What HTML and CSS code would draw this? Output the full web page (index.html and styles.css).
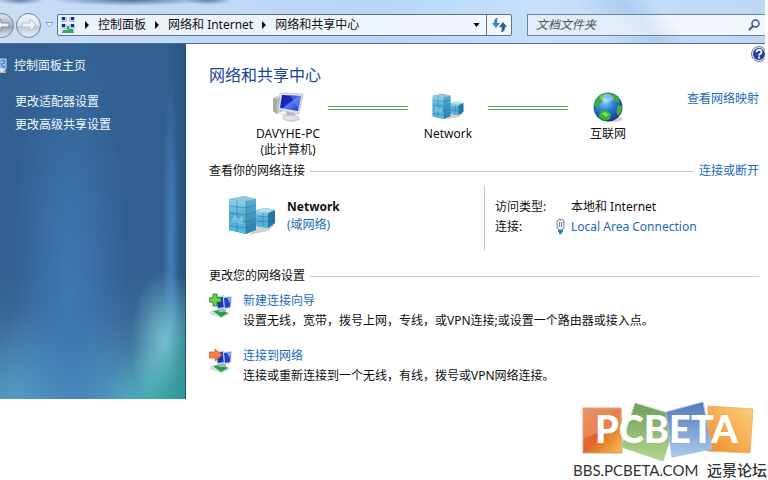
FILE: index.html
```html
<!DOCTYPE html>
<html lang="zh-CN">
<head>
<meta charset="utf-8">
<title>网络和共享中心</title>
<link rel="stylesheet" href="styles.css">
</head>
<body>
<svg class="defs" width="0" height="0" aria-hidden="true">
  <defs>
    <linearGradient id="face" x1="0" y1="0" x2="0" y2="1"><stop offset="0" stop-color="#8fd6ee"/><stop offset=".5" stop-color="#4fa9d2"/><stop offset="1" stop-color="#58b9de"/></linearGradient>
    <linearGradient id="side" x1="0" y1="0" x2="0" y2="1"><stop offset="0" stop-color="#58b2d6"/><stop offset="1" stop-color="#2c7fae"/></linearGradient>
    <linearGradient id="screen" x1="0" y1="0" x2="1" y2="1"><stop offset="0" stop-color="#1420a0"/><stop offset=".45" stop-color="#1a2cc0"/><stop offset=".5" stop-color="#5a7cf0"/><stop offset="1" stop-color="#1b2fc4"/></linearGradient>
    <radialGradient id="sea" cx=".4" cy=".3" r=".75"><stop offset="0" stop-color="#8fdcff"/><stop offset=".4" stop-color="#2f86dc"/><stop offset="1" stop-color="#122a86"/></radialGradient>
    <linearGradient id="orange" x1="0" y1="0" x2="1" y2="1"><stop offset="0" stop-color="#e8834f"/><stop offset=".5" stop-color="#e0642c"/><stop offset="1" stop-color="#f6c445"/></linearGradient>
    <linearGradient id="green" x1="0" y1="0" x2="0" y2="1"><stop offset="0" stop-color="#6f9f5c"/><stop offset="1" stop-color="#b4d68c"/></linearGradient>
    <linearGradient id="blue" x1="0" y1="0" x2="0" y2="1"><stop offset="0" stop-color="#4f78bd"/><stop offset="1" stop-color="#a9cbec"/></linearGradient>
    <linearGradient id="yellow" x1="0" y1="1" x2="1" y2="0"><stop offset="0" stop-color="#f08a2a"/><stop offset=".6" stop-color="#f8b45a"/><stop offset="1" stop-color="#fbd07e"/></linearGradient>
    <symbol id="servers" viewBox="0 0 48 40">
      <path d="M20 39 32 28 47 29 40 35Z" fill="#000" opacity=".18"/>
      <path d="M29 14 37 12 47 14V27L40 32 27 30V15Z" fill="#3b93bd"/>
      <path d="M27 15 40 17V32L27 30Z" fill="url(#face)"/>
      <path d="M40 17 47 14V27L40 32Z" fill="#2a76a2"/>
      <path d="M27 15 37 12 47 14 40 17Z" fill="#b5dfec"/>
      <path d="M1 3 16 0 28 3V34L18 38 1 34Z" fill="url(#side)"/>
      <path d="M1 3 18 5V38L1 34Z" fill="url(#face)"/>
      <path d="M1 3 16 0 28 3 18 5Z" fill="#9cc5d4"/>
      <path d="M9 4V36M1 10 18 12 28 9M1 17 18 19 28 16M1 24 18 26 28 23M1 30 18 32 28 29M18 5V38M29 20 40 21 47 19M29 25 40 26 47 23M35 17V30" fill="none" stroke="#236f9c" stroke-width=".6" opacity=".8"/>
      <path d="M3 24 7 19 11 23 15 19V28L3 26Z" fill="#b9e5f2" opacity=".4"/>
    </symbol>
    <symbol id="netpc" viewBox="0 0 24 25">
      <path d="M1 18 9 16 20 19 20 22 12 25 1 21Z" fill="#d5dcdd"/>
      <path d="M4 18 12 17 19 20 12 24Z" fill="#25a04c"/>
      <path d="M10 15H17V19H10Z" fill="#9ab8b4"/>
      <path d="M6 4 15 2 17 15 8 17Z" fill="#bfd0ef"/><path d="M7 5 14 4 15 14 9 15Z" fill="#1c33bd"/>
      <path d="M14 4 23 3 22 15 15 17Z" fill="#cbd8f2"/><path d="M15 5 22 4 21 14 16 15Z" fill="#2241cc"/><path d="M18 5 22 4 21 10Z" fill="#8fb0f4"/>
    </symbol>
  </defs>
</svg>
<div class="window">
  <header class="toolbar">
    <div class="history">
      <button class="round" type="button" aria-label="后退"><svg width="16" height="14" viewBox="0 0 16 14"><path d="M7 1 1 7l6 6v-4h8V5H7Z" fill="#eef3f8" stroke="#7f8c9b"/></svg></button>
      <button class="round" type="button" aria-label="前进"><svg width="16" height="14" viewBox="0 0 16 14"><path d="M9 1l6 6-6 6V9H1V5h8Z" fill="#eef3f8" stroke="#b9c4d0"/></svg></button>
      <button class="plain recent" type="button" aria-label="最近页面"><svg width="9" height="6" viewBox="0 0 9 6"><path d="M1 .5h7L4.500 5Z" fill="#f4f9fe" stroke="#8aa0b8"/></svg></button>
    </div>
    <nav class="address" aria-label="地址">
      <svg width="16" height="18" viewBox="0 0 16 18"><path d="M1 1h6v5H1zM9 1h6v5H9zM1 8h6v5H1zM9 8h6v5H9z" fill="#b7c8e8"/><path d="M2 1h3v3H2zM11 1h3v3h-3zM2 8h3v3H2zM11 8h3v3h-3z" fill="#20278f"/><path d="M7 10h2v3h4l1 4H2l1-3h4Z" fill="#35ae69"/></svg>
      <span class="arrow"></span><a href="#">控制面板</a>
      <span class="arrow"></span><a href="#">网络和 Internet</a>
      <span class="arrow"></span><a href="#">网络和共享中心</a>
      <button class="plain expand" type="button" aria-label="以前的位置"><svg width="7" height="4" viewBox="0 0 8 5"><path d="M0 0h8L4 5Z" fill="#111"/></svg></button>
      <button class="plain refresh" type="button" aria-label="刷新"><svg width="15" height="14" viewBox="0 0 15 14"><path d="M6 0C3 0 2 2 2 5H0l4 5 4-5H5.500C5 3 5 1 6 0Z" fill="#3f86bd"/><path d="M9 14c3 0 4-2 4-5h2l-4-5-4 5h2.500c.5 2 .5 4-.5 5Z" fill="#2f6591"/></svg></button>
    </nav>
    <form class="search">
      <input type="text" aria-label="搜索" placeholder="文档文件夹">
      <button class="plain" type="button" aria-label="开始搜索"><svg width="12" height="12" viewBox="0 0 12 12"><circle cx="7.500" cy="4.500" r="3.500" fill="none" stroke="#37598f" stroke-width="1.500"/><path d="M5 7 1 11" stroke="#37598f" stroke-width="2"/></svg></button>
    </form>
  </header>
  <div class="body">
    <aside class="sidebar">
      <a class="home" href="#"><svg width="7" height="16" viewBox="0 0 7 16"><path d="M0 1h6v10H0Z" fill="#5a8be0" stroke="#cfdcf2"/><path d="M1 4h2M3 7h2M1 9h1" stroke="#e8f2ff"/><path d="M0 11h5l1 4H0Z" fill="#b4bcc6"/><circle cx="2" cy="12" r="2" fill="#e9e4dc"/></svg>控制面板主页</a>
      <a href="#">更改适配器设置</a>
      <a href="#">更改高级共享设置</a>
    </aside>
    <main>
      <button class="plain help" type="button" aria-label="帮助"><svg width="16" height="16" viewBox="0 0 16 16"><circle cx="8" cy="8" r="7.500" fill="#dfe2ef" stroke="#777ca6"/><circle cx="8" cy="8" r="6" fill="#2a3f9f"/><path d="M5.500 6.200C5.500 3 10.500 3 10.500 6c0 2-2.500 1.800-2.500 3.500M8 10.500v2" fill="none" stroke="#fff" stroke-width="1.800"/></svg></button>
      <h1>网络和共享中心</h1>
      <div class="map">
        <div class="node">
          <svg width="32" height="32" viewBox="0 0 32 32"><path d="M8 23 20 20 29 29 19 31Z" fill="#000" opacity=".1"/><path d="M1 7 5 5 10 6V21L5 23 1 20Z" fill="#c9ccc4"/><path d="M1 7 5 8V23L1 20Z" fill="#a6aaa2"/><path d="M6 9 9 8M6 12 9 11" stroke="#5d645f"/><circle cx="7" cy="18" r="1" fill="#47b84b"/><path d="M14 20 22 21 23 26 15 26Z" fill="#b7bcc6"/><ellipse cx="19" cy="27" rx="8" ry="3" fill="#dfe3e9" stroke="#aeb5c0" stroke-width=".7"/><path d="M8 2 31 3 27 23 6 19Z" fill="#dce2ed" stroke="#a8b3c8" stroke-width=".6"/><path d="M10 4 29 5 26 20 8 17Z" fill="url(#screen)"/><path d="M18 4 29 5 27 18Z" fill="#6d90ee" opacity=".55"/></svg>
          <span>DAVYHE-PC</span><span>(此计算机)</span>
        </div>
        <div class="link"></div>
        <div class="node"><svg width="32" height="32"><use href="#servers"/></svg><span>Network</span></div>
        <div class="link"></div>
        <div class="node">
          <svg width="32" height="32" viewBox="0 0 32 32"><ellipse cx="20" cy="28" rx="11" ry="3" fill="#000" opacity=".18"/><circle cx="16" cy="16" r="14.500" fill="url(#sea)"/><path d="M3 12C4 6 8 3 13 2l1 3-4 2 1 4-4 2-1 4-3-1Z" fill="#3fae35"/><path d="M17 2c5 0 9 3 11 7l-2 3-4-2-1-4-4-1Z" fill="#3da33c"/><path d="M8 20l6-1 5 4-1 5-5 2-6-4Z" fill="#35b52f"/><path d="M26 14l4 1c0 4-1 7-4 10l-2-4Z" fill="#49ab3c"/><path d="M9 22l5-1 3 3-3 2Z" fill="#7bdc55"/><ellipse cx="15" cy="7" rx="7" ry="4" fill="#fff" opacity=".3"/></svg>
          <span>互联网</span>
        </div>
        <a class="full" href="#">查看网络映射</a>
      </div>
      <div class="section"><h2>查看你的网络连接</h2><hr><a href="#">连接或断开</a></div>
      <div class="network">
        <div class="identity">
          <svg width="48" height="40"><use href="#servers"/></svg>
          <div><strong>Network</strong><a href="#">(域网络)</a></div>
        </div>
        <dl>
          <dt>访问类型:</dt><dd>本地和 Internet</dd>
          <dt>连接:</dt><dd><svg width="9" height="16" viewBox="0 0 9 16"><path d="M1 2 3 .5h3L8 2v7L6 11H3L1 9Z" fill="#e4ebf3" stroke="#74869c"/><path d="M3.500 3v5M5.500 3v5" stroke="#7690b0"/><path d="M2 11h5v2H6v2H3v-2H2Z" fill="#357fb8"/></svg><a href="#">Local Area Connection</a></dd>
        </dl>
      </div>
      <div class="section"><h2>更改您的网络设置</h2><hr></div>
      <ul class="tasks">
        <li>
          <svg width="24" height="25" viewBox="0 0 24 25"><use href="#netpc" width="24" height="25"/><path d="M4 1h4v4h4v4H8v4H4V9H0V5h4Z" fill="#6fd04a" stroke="#258c25"/></svg>
          <div><a href="#">新建连接向导</a><p>设置无线，宽带，拨号上网，专线，或VPN连接;或设置一个路由器或接入点。</p></div>
        </li>
        <li>
          <svg width="24" height="25" viewBox="0 0 24 25"><use href="#netpc" width="24" height="25"/><path d="M0 4h6V1l7 6-7 6v-3H0Z" fill="#f08448" stroke="#d05a26" stroke-width=".7"/></svg>
          <div><a href="#">连接到网络</a><p>连接或重新连接到一个无线，有线，拨号或VPN网络连接。</p></div>
        </li>
      </ul>
    </main>
  </div>
</div>
<footer>
  <svg width="200" height="81" viewBox="0 0 200 81" role="img" aria-label="PCBETA">
    <g stroke-width="1">
      <path d="M15 9 53 9 54 54 15 54Z" fill="url(#orange)" stroke="#d99a76"/>
      <path d="M15 9H53V22C42 36 28 32 15 40Z" fill="#f5b594" opacity=".35"/>
      <path d="M140 7 185 10 182 54 139 52Z" fill="url(#yellow)" stroke="#e6b878"/>
      <path d="M67 4 110 17 95 62 53 48Z" fill="url(#green)" stroke="#b9cfaa"/>
      <path d="M98 13 135 3 144 50 104 58Z" fill="url(#blue)" stroke="#a9bddc"/>
    </g>
    <text class="brand" x="27" y="44">PCBETA</text>
    <text class="site" x="5" y="77">BBS.PCBETA.COM</text>
    <text class="forum" x="139" y="77">远景论坛</text>
  </svg>
</footer>
</body>
</html>
```
FILE: styles.css
```css
* { box-sizing: border-box; }
body {
  margin: 0;
  background: #fff;
  color: #111;
  font: 12px/16px "Noto Sans", "Noto Sans CJK SC", sans-serif;
}
.defs { position: absolute; }
svg { display: block; flex: none; }
a { color: #1a6bb8; text-decoration: none; white-space: nowrap; }
h1, h2, p, ul, dl, dd { margin: 0; padding: 0; font-weight: normal; }
.plain { border: 0; padding: 0; background: none; display: grid; place-items: center; }

.window { margin-right: 3px; overflow: hidden; }
.toolbar {
  display: flex;
  align-items: center;
  padding: 14px 0 7px;
  border-bottom: 1px solid #4f6d8c;
  background:
    radial-gradient(ellipse 24px 5px at 20px 0, #5f7d9c, transparent),
    radial-gradient(ellipse 80px 6px at 130px 0, #54728f, transparent),
    radial-gradient(ellipse 24px 5px at 208px 0, #5f7d9c, transparent),
    linear-gradient(50deg, transparent 76%, #b0cdf0 82%, transparent 86%),
    linear-gradient(90deg, #c9def5, #b9d6f6 50%, #c5e1fb 70%, #bcd8f5);
}
.history { display: flex; align-items: center; width: 57px; height: 22px; }
.round {
  flex: none;
  width: 25px;
  height: 25px;
  margin-left: 2px;
  padding: 0;
  display: grid;
  place-items: center;
  border: 1px solid #71859c;
  border-radius: 50%;
  background: linear-gradient(#eff4f9, #dbe4ed 50%, #b8c6d5 52%, #e7f0f8);
}
.round:first-child { margin-left: -11px; background: linear-gradient(#dce3ea, #aab6c2 50%, #8f9cab 52%, #dfe8f0); }
.recent { margin-left: 4px; }
.address {
  flex: 1;
  display: flex;
  align-items: center;
  height: 22px;
  padding-left: 2px;
  border: 1px solid #5f7389;
  border-radius: 2px;
  background: linear-gradient(90deg, #e9f1fa, #f2f7fd);
}
.address a { color: #111; }
.arrow { margin: 0 9px; border: solid transparent; border-width: 4px 0 4px 4px; border-left-color: #111; }
.expand { width: 20px; height: 20px; margin-left: auto; }
.refresh { width: 25px; height: 20px; border-left: 1px solid #5f7389; }
.search {
  display: flex;
  align-items: center;
  width: 238px;
  height: 22px;
  margin-left: 15px;
  padding: 0 5px 0 8px;
  border: 1px solid #6f8399;
  border-right: 0;
  background: linear-gradient(50deg, #e2edfa 40%, #d9e7f6 50%, #f2f7fd 62%);
}
.search input { flex: 1; min-width: 0; padding: 0; border: 0; background: none; font: italic 12px/16px "Noto Sans", "Noto Sans CJK SC", sans-serif; }
.search input::placeholder { color: #555; opacity: 1; }

.body { display: flex; }
.sidebar {
  width: 186px;
  padding: 14px 0 0;
  display: flex;
  flex-direction: column;
  border-right: 1px solid #244f7c;
  background:
    linear-gradient(115deg, transparent 86%, #23938a99 95%),
    radial-gradient(ellipse 36px 75px at 166px 300px, #86d6dccc, transparent),
    radial-gradient(ellipse 56px 60px at 158px 360px, #42c9bd99, transparent),
    radial-gradient(ellipse 8px 170px at 171px 200px, #4480c0, transparent),
    radial-gradient(ellipse 60px 270px at 70px 250px, #3f78b4, transparent),
    radial-gradient(ellipse 90px 110px at 60px 365px, #62b4e099, transparent),
    linear-gradient(90deg, transparent 90%, #1f467066),
    linear-gradient(#325f90, #315f8f 65%, #3a6a97 78%, #4e8fb2);
}
.sidebar a { color: #f1f7fd; line-height: 23px; padding-left: 15px; }
.sidebar .home { display: flex; align-items: center; gap: 7px; padding: 0; line-height: 16px; margin-bottom: 16px; }
main { position: relative; flex: 1; padding: 19px 6px 13px 23px; }
.help { position: absolute; top: 2px; right: -2px; }
h1 { color: #17459b; font-size: 16px; line-height: 24px; }
.map { display: flex; margin: 4px 0 5px; padding-left: 39px; }
.node { width: 80px; display: flex; flex-direction: column; align-items: center; line-height: 16px; white-space: nowrap; }
.node svg { margin-bottom: 3px; }
.link { width: 80px; height: 4px; margin-top: 15px; border: solid #5cab5c; border-width: 1px 0; }
.full { margin-left: auto; }
.section { display: flex; align-items: center; gap: 5px; }
h2 { font-size: 12px; line-height: 16px; }
hr { flex: 1; margin: 0; border: 0; border-top: 1px solid #c8c8c8; }
.network { display: flex; height: 64px; margin: 7px 0 18px; }
.identity { display: flex; align-items: center; gap: 11px; width: 276px; padding: 0 0 4px 19px; border-right: 1px solid #c4c4c4; }
.identity div { display: flex; flex-direction: column; line-height: 18px; }
dl { display: grid; grid-template-columns: 62px 1fr; align-content: center; padding: 0 0 2px 10px; line-height: 20px; }
dd { display: flex; align-items: center; padding-left: 14px; }
dd svg { margin: 0 6px 0 -15px; }
.tasks { display: grid; gap: 15px; margin-top: 7px; list-style: none; line-height: 20px; }
.tasks li { display: flex; align-items: flex-start; gap: 10px; }
.tasks svg { margin-top: 2px; }
footer { display: flex; justify-content: flex-end; }
.brand { fill: #fff; font: 900 38px Lato, sans-serif; }
.site { fill: #333; font: 15px Lato, sans-serif; }
.forum { fill: #333; font: 500 15px "Noto Sans CJK SC", sans-serif; }
```
